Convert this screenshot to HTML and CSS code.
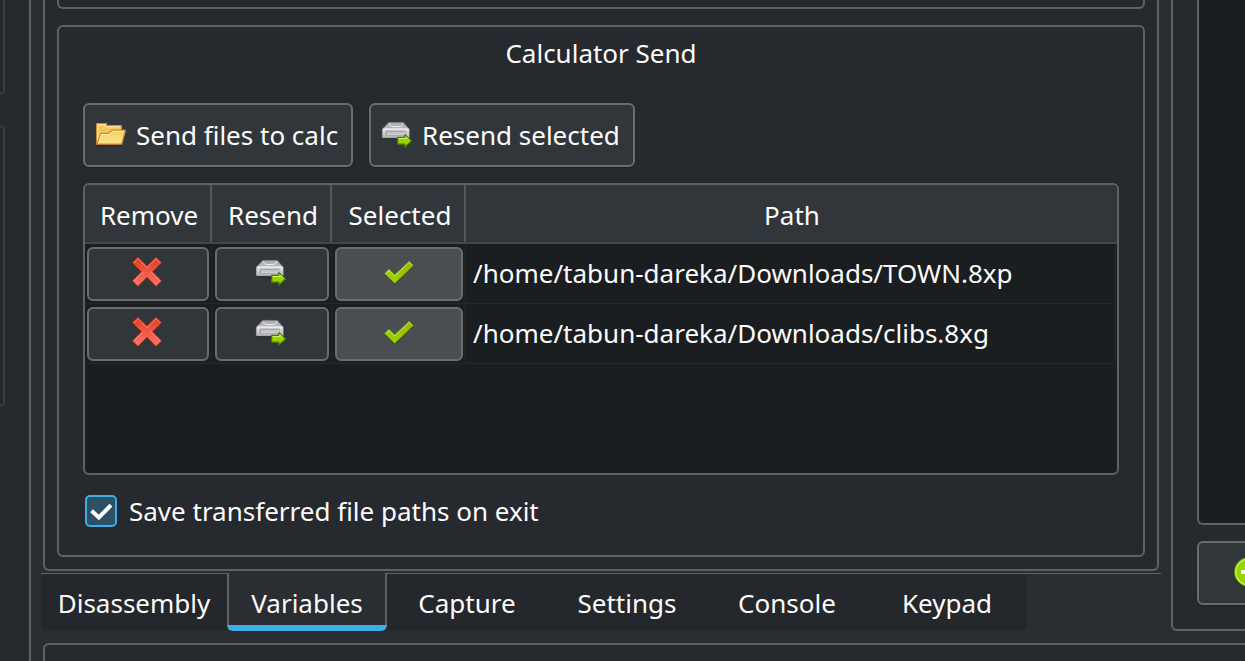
FILE: index.html
```html
<!DOCTYPE html>
<html lang="en">
<head>
<meta charset="utf-8">
<title>Calculator Send</title>
<link rel="stylesheet" href="styles.css">
</head>
<body>
<svg class="defs" aria-hidden="true">
  <defs>
    <linearGradient id="gDrive" x1="0" y1="0" x2="0" y2="1"><stop offset="0" stop-color="#e4e4e6"/><stop offset="1" stop-color="#b4b4b8"/></linearGradient>
    <linearGradient id="gLid" x1="0" y1="0" x2="0" y2="1"><stop offset="0" stop-color="#a9a9ad"/><stop offset="1" stop-color="#d6d6d8"/></linearGradient>
    <linearGradient id="gFolder" x1="0" y1="0" x2="0" y2="1"><stop offset="0" stop-color="#f6cf68"/><stop offset="1" stop-color="#fde68a"/></linearGradient>
    <linearGradient id="gRed" x1="0" y1="0" x2="0" y2="1"><stop offset="0" stop-color="#e03c22"/><stop offset="1" stop-color="#ff7468"/></linearGradient>
    <linearGradient id="gGreen" x1="0" y1="1" x2="1" y2="0"><stop offset="0" stop-color="#9bd800"/><stop offset=".55" stop-color="#98c900"/><stop offset="1" stop-color="#a4ae10"/></linearGradient>
    <symbol id="folder" viewBox="0 0 32 32">
      <path d="M2 27.4H27" stroke="#1c1f22" stroke-opacity=".6" stroke-width="1.4"/>
      <path d="M1.7 25.8V5.6H11.5V7.6H26.4V12" fill="#f3c65c" stroke="#d08b35" stroke-width="1.3"/>
      <path d="M2.8 24V6.8H10.5V8.8H25.3" fill="none" stroke="#fff0b8" stroke-width="1"/>
      <path d="M1.8 26.2L5.9 15.3H13.7L16.9 12.2H30.4L26.7 26.2Z" fill="url(#gFolder)" stroke="#d08b35" stroke-width="1.3" stroke-linejoin="round"/>
      <path d="M3.5 25L6.8 16.5H14.2L17.4 13.4H29" fill="none" stroke="#fff0b8" stroke-width=".9"/>
    </symbol>
    <symbol id="drive" viewBox="0 0 32 32">
      <path d="M1.5 20.8H28" stroke="#1b1e21" stroke-opacity=".6" stroke-width="1.4"/>
      <path d="M7.8 4.4H22.2L28.2 11.2V19.7H1.4V11.2Z" fill="url(#gLid)" stroke="#87878b" stroke-width=".8" stroke-linejoin="round"/>
      <path d="M1.6 11.4H28V19.5H1.6Z" fill="url(#gDrive)"/>
      <path d="M2 11H27.6" stroke="#f7f7f7" stroke-width="1.1"/>
      <path d="M8 5.4Q8.8 8.5 12 8.5H18Q21.2 8.5 22 5.4" fill="#b1b1b5" stroke="#eeeeef" stroke-width=".9"/>
      <path d="M5.2 13.2H24.6V17.4H5.2Z" fill="#c5c5c8" stroke="#8e8e92" stroke-width=".9"/>
      <path d="M5.8 16.9H24V13.6" fill="none" stroke="#eee" stroke-width=".6"/>
      <path d="M16.6 19.4H23.8V16.6L30.6 22.9L23.8 29V26.2H16.6Z" fill="#98d400" stroke="#467a08" stroke-width="1.2" stroke-linejoin="round"/>
      <path d="M17.7 20.5H24.8V18.9L28.2 22" fill="none" stroke="#d7f36a" stroke-width="1"/>
    </symbol>
    <symbol id="cross" viewBox="0 0 32 32">
      <path d="M7 1.2L16 10.2L25 1.2L30.8 7L21.9 16L30.8 25L25 31L16 22L7 31L1.2 25L10.1 16L1.2 7Z" fill="#17191b" opacity=".4"/>
      <path d="M6.9 1.3L16 10.3L25.1 1.3L30.5 6.8L21.4 15.8L30.5 24.9L25.1 30.3L16 21.3L6.9 30.3L1.5 24.9L10.6 15.8L1.5 6.8Z" fill="url(#gRed)" stroke="#c9321c" stroke-width=".9" stroke-linejoin="round"/>
      <path d="M2.7 7L6.9 2.7L16 11.7L25.1 2.7L29.3 7M11.8 16L2.8 24.9M20.2 16L29.2 24.9" fill="none" stroke="#ffc3b4" stroke-width=".9" stroke-dasharray="1 .7"/>
    </symbol>
    <symbol id="tick" viewBox="0 0 32 32">
      <path d="M1.4 18.3L6 14.3L11.7 19.9L26.6 5.9L31 10.3L11.7 29.1Z" fill="#1d2022" opacity=".45"/>
      <path d="M1.5 17.4L6 13.1L11.7 18.7L26.2 5.1L30.5 9.5L11.7 27.6Z" fill="url(#gGreen)" stroke="#608c08" stroke-width=".9" stroke-linejoin="round"/>
      <path d="M2.8 17.3L6 14.3L11.7 19.9L26.2 6.3L29.1 9.4" fill="none" stroke="#e6f792" stroke-width="1" stroke-dasharray="1 .6"/>
    </symbol>
    <symbol id="plus" viewBox="0 0 32 32">
      <circle cx="16" cy="16.8" r="15" fill="#17191b" opacity=".5"/>
      <circle cx="16" cy="16" r="14.4" fill="#98d400" stroke="#5b9a05" stroke-width="1.2"/>
      <circle cx="16" cy="16" r="13.2" fill="none" stroke="#d5f36f" stroke-width="1.2"/>
      <path d="M8 14H14V8H18V14H24V18H18V24H14V18H8Z" fill="#fff"/>
    </symbol>
  </defs>
</svg>

<div class="window">
  <div class="docks">
    <aside class="left-dock">
      <div class="ghost-box ghost-top"></div>
      <div class="ghost-box ghost-bottom"></div>
    </aside>

    <main class="center">
      <section class="pane">
        <div class="previous-group"></div>
        <div class="group">
          <h1 class="group-title">Calculator Send</h1>
          <div class="toolbar">
            <button class="button send"><svg class="icon"><use href="#folder"/></svg>Send files to calc</button>
            <button class="button resend"><svg class="icon"><use href="#drive"/></svg>Resend selected</button>
          </div>
          <div class="table">
            <div class="row header">
              <div class="head head-first">Remove</div><div class="head">Resend</div><div class="head">Selected</div><div class="head head-last">Path</div>
            </div>
            <div class="row">
              <div class="cell first"><button class="button tool nudge"><svg class="icon"><use href="#cross"/></svg></button></div>
              <div class="cell"><button class="button tool nudge"><svg class="icon"><use href="#drive"/></svg></button></div>
              <div class="cell"><button class="button tool checked"><svg class="icon"><use href="#tick"/></svg></button></div>
              <div class="cell path">/home/tabun-dareka/Downloads/TOWN.8xp</div>
            </div>
            <div class="row">
              <div class="cell first"><button class="button tool nudge"><svg class="icon"><use href="#cross"/></svg></button></div>
              <div class="cell"><button class="button tool nudge"><svg class="icon"><use href="#drive"/></svg></button></div>
              <div class="cell"><button class="button tool checked"><svg class="icon"><use href="#tick"/></svg></button></div>
              <div class="cell path">/home/tabun-dareka/Downloads/clibs.8xg</div>
            </div>
          </div>
          <div class="option">
            <span class="checkbox"><svg class="check" viewBox="0 0 28 28"><path d="M4.6 13.8L11.8 20.4L24 8.2" fill="none" stroke="#fff" stroke-width="4"/></svg></span>
            <span>Save transferred file paths on exit</span>
          </div>
        </div>
      </section>
      <nav class="tabs">
        <div class="tab wide">Disassembly</div>
        <div class="tab active">Variables</div>
        <div class="tab">Capture</div>
        <div class="tab">Settings</div>
        <div class="tab">Console</div>
        <div class="tab last">Keypad</div>
        <div class="tab-rest"></div>
      </nav>
    </main>

    <aside class="right-dock">
      <div class="list"></div>
      <button class="button add"><svg class="icon"><use href="#plus"/></svg></button>
    </aside>
  </div>
  <div class="lower">
    <div class="lower-left"></div>
    <div class="lower-box"></div>
  </div>
</div>
</body>
</html>
```
FILE: styles.css
```css
* { box-sizing: border-box; }

body {
  margin: 0;
  background: #2a2e32;
  color: #fcfcfc;
  font: 26px/36px "Noto Sans", sans-serif;
}

.defs { display: block; width: 0; height: 0; }

.window {
  width: 1245px;
  height: 661px;
  overflow: hidden;
  display: flex;
  flex-direction: column;
}

.docks { display: flex; height: 643px; flex: none; }

.left-dock {
  width: 31px;
  flex: none;
  background: #26292d;
  border-right: 2px solid #5f6264;
}

.ghost-box {
  width: 5px;
  border: 2px solid #3a3d41;
  border-left: 0;
}
.ghost-top { height: 95px; border-top: 0; border-bottom-right-radius: 6px; }
.ghost-bottom { height: 282px; margin-top: 30px; border-radius: 0 6px 6px 0; }

.center { width: 1140px; flex: none; }

.pane {
  height: 571px;
  margin: 0 12px;
  padding: 0 12px;
  background: #26292d;
  border: 2px solid #5f6264;
  border-top: 0;
  border-radius: 0 0 6px 6px;
}

.previous-group {
  height: 9px;
  border: 2px solid #5f6264;
  border-top: 0;
  border-radius: 0 0 6px 6px;
}

.group {
  height: 532px;
  margin-top: 16px;
  padding: 8px 24px 0;
  border: 2px solid #5f6264;
  border-radius: 6px;
}

.group-title {
  margin: 0;
  text-align: center;
  font-size: inherit;
  font-weight: 400;
}

.toolbar { display: flex; gap: 16px; margin-top: 32px; }

.button {
  height: 64px;
  display: flex;
  align-items: center;
  margin: 0;
  padding: 0 0 0 10px;
  border: 2px solid #696d70;
  border-radius: 6px;
  background: #31363a;
  color: inherit;
  font: inherit;
  white-space: nowrap;
  box-shadow: 0 1px 1px #1e2124;
}

.icon { width: 32px; height: 32px; flex: none; }
.toolbar .icon { margin: 0 9px 2px 0; }
.send { width: 270px; }
.resend { width: 266px; }

.table {
  height: 292px;
  margin-top: 16px;
  background: #1b1e20;
  border: 2px solid #5f6264;
  border-radius: 6px;
  overflow: hidden;
}

.row {
  display: grid;
  grid-template-columns: 127px 120px 134px 1fr;
  height: 60px;
  margin-right: 1px;
}

.header {
  height: 59px;
  margin: 0;
  background: #31363a;
  border-bottom: 2px solid #43474b;
}
.head {
  display: flex;
  align-items: center;
  justify-content: center;
  padding: 2px 0 0 4px;
  border-right: 2px solid #54585b;
}
.head-first { padding-left: 3px; }
.head-last { border-right: 0; padding-left: 1px; }

.cell {
  padding: 3px 2px 2px 3px;
  border-right: 1px solid #24282b;
  border-bottom: 1px solid #24282b;
}
.first { padding-left: 2px; }
.path { padding: 11px 0 0 7px; white-space: nowrap; }

.tool {
  width: 100%;
  height: 54px;
  padding: 0 0 4px;
  justify-content: center;
}
.nudge { padding-right: 2px; }
.checked { background: #4a4e52; }

.option { display: flex; align-items: center; gap: 12px; margin: 18px 0 0 2px; }

.checkbox {
  width: 32px;
  height: 32px;
  border: 2px solid #3daee9;
  border-radius: 5px;
  background: #2e5064;
}
.check { display: block; width: 28px; height: 28px; }

.tabs {
  display: flex;
  height: 58px;
  margin: 2px 10px 0;
}
.tab {
  width: 160px;
  flex: none;
  padding-top: 11px;
  text-align: center;
  background: #24272b;
  border-top: 1px solid #5f6264;
}
.wide { width: 186px; border-bottom-left-radius: 6px; }
.active {
  padding-top: 12px;
  background: linear-gradient(#3daee9, #3daee9) bottom / 100% 6px no-repeat, #2a2e32;
  border-top: 0;
  border-radius: 0 0 6px 6px;
  position: relative;
}
.active::before {
  content: "";
  position: absolute;
  inset: 0 0 6px;
  border: solid #5f6264;
  border-width: 0 2px;
}
.last { border-bottom-right-radius: 6px; }
.tab-rest { flex: 1; height: 1px; background: #5f6264; }

.right-dock {
  width: 120px;
  height: 631px;
  flex: none;
  padding-left: 24px;
  background: #26292d;
  border: 2px solid #5f6264;
  border-top: 0;
  border-bottom-left-radius: 6px;
}
.list {
  height: 525px;
  background: #1b1e20;
  border: 2px solid #5f6264;
  border-top: 0;
  border-bottom-left-radius: 6px;
}
.add { width: 160px; margin-top: 16px; padding: 0 0 2px 34px; }

.lower { display: flex; height: 18px; flex: none; }
.lower-left { width: 31px; background: #26292d; border-right: 2px solid #5f6264; flex: none; }
.lower-box {
  width: 1300px;
  height: 60px;
  margin-left: 12px;
  flex: none;
  background: #26292d;
  border: 2px solid #5f6264;
  border-radius: 6px;
}
```
